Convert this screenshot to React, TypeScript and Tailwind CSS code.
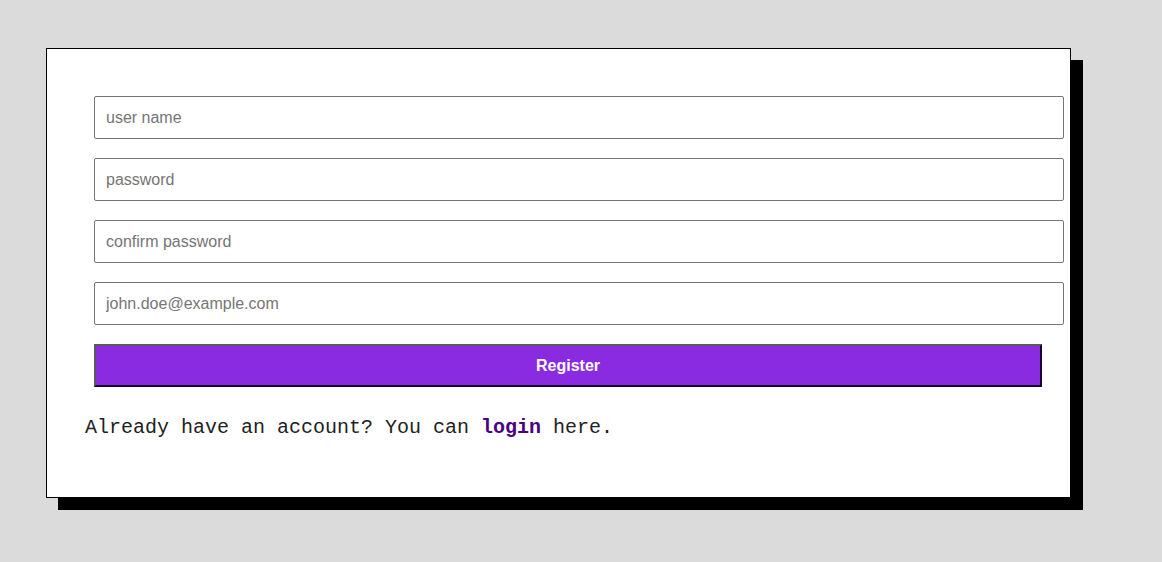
export default function App() {
  return (
    <div className="min-h-[562px] w-full bg-[#dbdbdb] pl-[46px] pt-[48px]">
      <div className="h-[450px] w-[1025px] border border-black bg-white shadow-[12px_12px_0_0_#000]">
        <form className="flex flex-col gap-[19px] pl-[47px] pt-[47px]" onSubmit={e => e.preventDefault()}>
          <input
            className="h-[43px] w-[970px] rounded-[2px] border border-[#767676] bg-white px-[11px] text-[16px] text-black placeholder:text-[#757575] outline-none"
            style={{ fontFamily: '"Liberation Sans", Arial, sans-serif' }}
            placeholder="user name"
          />
          <input
            type="password"
            className="h-[43px] w-[970px] rounded-[2px] border border-[#767676] bg-white px-[11px] text-[16px] text-black placeholder:text-[#757575] outline-none"
            style={{ fontFamily: '"Liberation Sans", Arial, sans-serif' }}
            placeholder="password"
          />
          <input
            type="password"
            className="h-[43px] w-[970px] rounded-[2px] border border-[#767676] bg-white px-[11px] text-[16px] text-black placeholder:text-[#757575] outline-none"
            style={{ fontFamily: '"Liberation Sans", Arial, sans-serif' }}
            placeholder="confirm password"
          />
          <input
            type="email"
            className="h-[43px] w-[970px] rounded-[2px] border border-[#767676] bg-white px-[11px] text-[16px] text-black placeholder:text-[#757575] outline-none"
            style={{ fontFamily: '"Liberation Sans", Arial, sans-serif' }}
            placeholder="john.doe@example.com"
          />
          <button
            type="submit"
            className="h-[43px] w-[948px] border-2 border-t-[#5a5a5a] border-l-[#5a5a5a] border-b-[#1a0033] border-r-[#1a0033] bg-[#8a2be2] font-['Liberation_Sans',Arial,sans-serif] text-[16px] font-bold text-white"
          >
            Register
          </button>
        </form>
        <p className="mt-[29px] pl-[38px] font-['Liberation_Mono','Courier_New',monospace] text-[20px] leading-[23px] text-[#222]">
          Already have an account? You can <a href="#" className="font-bold text-[#4b0082]">login</a> here.
        </p>
      </div>
    </div>
  )
}
